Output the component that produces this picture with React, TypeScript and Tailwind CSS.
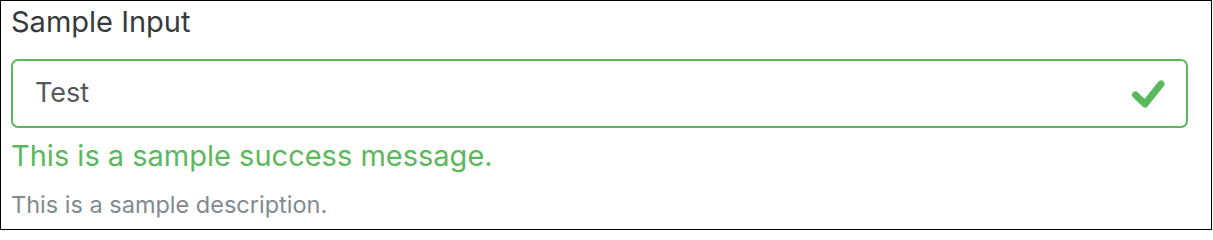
import React from 'react';

const CheckMark = () => (
  <svg width="36" height="32" viewBox="0 0 36 32" fill="none" className="shrink-0">
    <path
      d="M5.5 17 L15 26 L31 6"
      stroke="#5cb85c"
      strokeWidth="7"
      strokeLinecap="round"
      strokeLinejoin="round"
    />
  </svg>
);

const App = () => {
  return (
    <div className="w-[1212px] h-[230px] border border-black bg-white px-[10px] pt-[4px] font-['Inter',sans-serif]">
      <label className="block text-[29px] leading-[34px] text-[#373a3c] mb-[20px]">
        Sample Input
      </label>

      <div className="flex items-center h-[69px] w-[1177px] rounded-[7px] border-2 border-[#5cb85c] pl-[22px] pr-[20px]">
        <input
          type="text"
          defaultValue="Test"
          className="flex-1 min-w-0 bg-transparent text-[27px] text-[#55595c] outline-none"
        />
        <CheckMark />
      </div>

      <p className="mt-[11px] text-[29px] leading-[34px] text-[#5cb85c]">
        This is a sample success message.
      </p>
      <p className="mt-[18px] text-[23.5px] leading-[28px] text-[#818a91]">
        This is a sample description.
      </p>
    </div>
  );
};

export default App;
